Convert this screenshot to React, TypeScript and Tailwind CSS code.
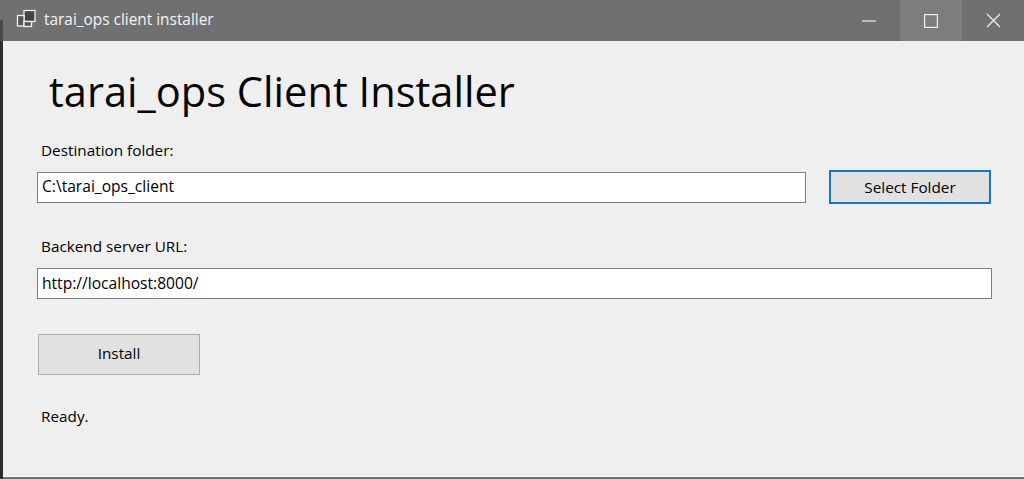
import React from "react";

const font = "font-['Open_Sans','Noto_Sans',sans-serif]";

const TitleBar = () => (
  <div className="relative flex h-[41px] shrink-0 items-center bg-[#707070] text-[#f4f4f4]">
    <div className="absolute bottom-0 left-0 h-[21px] w-[3px] bg-[#4a4a4a]" />
    <svg width="20" height="20" viewBox="0 0 20 20" className="mb-[4px] ml-[16px]" fill="none">
      <rect x="8" y="1.5" width="11" height="11" fill="#454545" stroke="#f0f0f0" strokeWidth="1.3" />
      <rect x="1.5" y="6.5" width="6.5" height="10.5" fill="#555555" stroke="#f0f0f0" strokeWidth="1.3" />
      <rect x="8" y="12.5" width="7.5" height="5" fill="#555555" stroke="#f0f0f0" strokeWidth="1.3" />
    </svg>
    <span className="ml-[8px] mb-[1px] text-[15.4px] leading-none">tarai_ops client installer</span>
    <div className="ml-auto flex h-full">
      <div className="flex w-[62px] items-center justify-center">
        <svg width="14" height="14" viewBox="0 0 14 14">
          <path d="M0 7h14" stroke="#e8e8e8" strokeWidth="1.3" />
        </svg>
      </div>
      <div className="flex w-[62px] items-center justify-center bg-[#7d7d7d]">
        <svg width="14" height="14" viewBox="0 0 14 14" fill="none">
          <rect x="0.6" y="0.6" width="12.8" height="12.8" stroke="#f0f0f0" strokeWidth="1.2" />
        </svg>
      </div>
      <div className="flex w-[62px] items-center justify-center">
        <svg width="15" height="15" viewBox="0 0 15 15" fill="none">
          <path d="M1 1l13 13M14 1L1 14" stroke="#ececec" strokeWidth="1.3" />
        </svg>
      </div>
    </div>
  </div>
);

const Field = ({ value, className }: { value: string; className: string }) => (
  <div className={`flex items-center border border-[#7f7f7f] bg-white pl-[4px] text-[15.6px] text-black ${className}`}>
    {value}
  </div>
);

export default function App() {
  return (
    <div className={`flex h-[479px] w-[1024px] flex-col overflow-hidden bg-[#efefef] ${font}`}>
      <TitleBar />
      <div className="flex min-h-0 flex-1">
        <div className="w-[3px] shrink-0 bg-[#2e2e2e]" />
        <div className="flex min-w-0 flex-1 flex-col border-b-[2px] border-[#707070]">
          <div className="flex flex-1 flex-col border-b border-[#fafafa] pl-[34px] pr-[32px] text-[15.3px] text-black">
            <h1 className="ml-[12px] mt-[23px] h-[54px] text-[41.6px] font-normal leading-[54px] text-[#050505]">
              tarai_ops Client Installer
            </h1>
            <label className="ml-[4px] mt-[22px] h-[20px] leading-[20px]">Destination folder:</label>
            <div className="mt-[10px] flex items-center justify-between">
              <Field value="C:\tarai_ops_client" className="h-[31px] w-[769px]" />
              <button className="mr-[1px] h-[34px] w-[162px] border-2 border-[#0f78d4] bg-[#e1e1e1] text-[15.3px] text-black">
                Select Folder
              </button>
            </div>
            <label className="ml-[4px] mt-[32px] h-[20px] leading-[20px]">Backend server URL:</label>
            <Field value="http://localhost:8000/" className="mt-[12px] h-[31px] w-[955px]" />
            <button className="ml-[1px] mt-[35px] h-[41px] w-[162px] border border-[#adadad] bg-[#e1e1e1] pb-[2px] text-[15.3px] text-black">
              Install
            </button>
            <span className="ml-[4px] mt-[31px] leading-[20px]">Ready.</span>
          </div>
        </div>
      </div>
    </div>
  );
}
